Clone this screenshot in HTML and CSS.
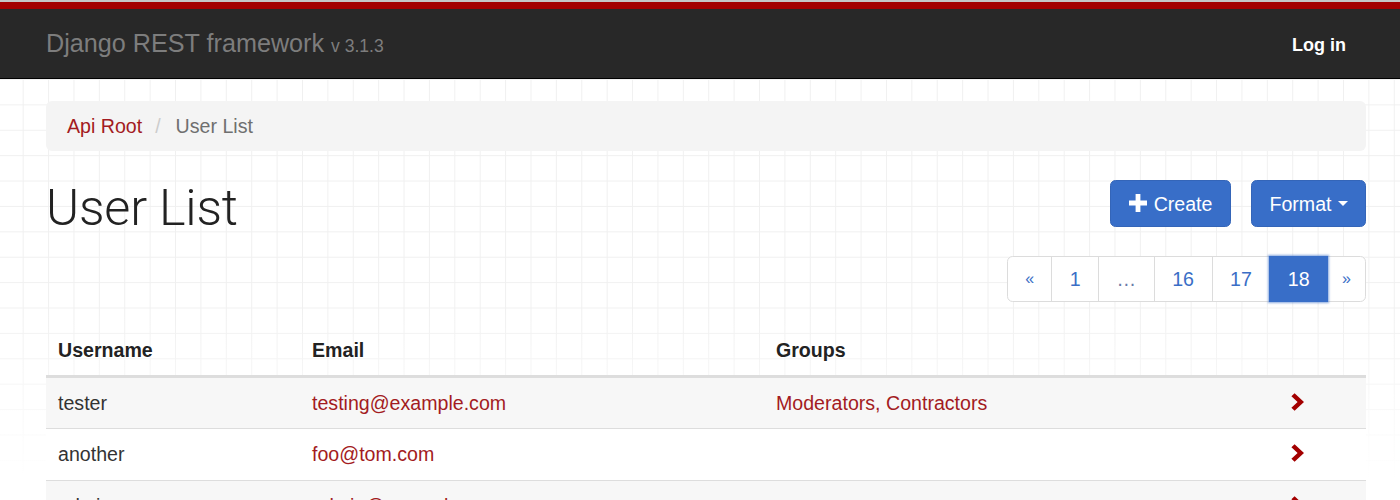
FILE: index.html
```
<!DOCTYPE html>
<html>
<head>
<meta charset="utf-8">
<title>User List – Django REST framework</title>
<link rel="stylesheet" href="styles.css">
</head>
<body>
<div class="topline">
  <nav class="navbar">
    <a class="brand" href="#">Django REST framework <span class="version">v 3.1.3</span></a>
    <a class="login" href="#">Log in</a>
  </nav>
</div>
<div class="page">
  <div class="container">
    <ul class="breadcrumb">
      <li><a href="#">Api Root</a></li>
      <li class="sep">/</li>
      <li class="active">User List</li>
    </ul>

    <div class="page-header">
      <h1>User List</h1>
      <div class="actions">
        <a class="btn" href="#"><svg class="plus" width="18" height="18" viewBox="0 0 18 18"><path d="M6.6 0h4.8v6.6H18v4.8h-6.6V18H6.6v-6.6H0V6.6h6.6z" fill="#fff"/></svg>Create</a>
        <a class="btn" href="#">Format<span class="caret"></span></a>
      </div>
    </div>

    <div class="pager-row">
      <ul class="pagination">
        <li><a class="arrow" href="#">«</a></li>
        <li><a href="#">1</a></li>
        <li><a class="dots" href="#">…</a></li>
        <li><a href="#">16</a></li>
        <li><a href="#">17</a></li>
        <li class="current"><a href="#">18</a></li>
        <li><a class="arrow" href="#">»</a></li>
      </ul>
    </div>

    <table class="table">
      <colgroup>
        <col class="c-user"><col class="c-email"><col class="c-groups"><col class="c-go">
      </colgroup>
      <thead>
        <tr><th>Username</th><th>Email</th><th>Groups</th><th></th></tr>
      </thead>
      <tbody>
        <tr>
          <td>tester</td>
          <td><a href="#">testing@example.com</a></td>
          <td><a href="#">Moderators</a><span class="comma">,</span> <a href="#">Contractors</a></td>
          <td class="go"><svg width="13" height="18" viewBox="0 0 13 18"><path d="M3.6 0.2L13 9L3.6 17.8L0.4 14.8L6.6 9L0.4 3.2Z" fill="#a30000"/></svg></td>
        </tr>
        <tr>
          <td>another</td>
          <td><a href="#">foo@tom.com</a></td>
          <td></td>
          <td class="go"><svg width="13" height="18" viewBox="0 0 13 18"><path d="M3.6 0.2L13 9L3.6 17.8L0.4 14.8L6.6 9L0.4 3.2Z" fill="#a30000"/></svg></td>
        </tr>
        <tr>
          <td>admin</td>
          <td><a href="#">admin@example.com</a></td>
          <td></td>
          <td class="go"><svg width="13" height="18" viewBox="0 0 13 18"><path d="M3.6 0.2L13 9L3.6 17.8L0.4 14.8L6.6 9L0.4 3.2Z" fill="#a30000"/></svg></td>
        </tr>
      </tbody>
    </table>
  </div>
</div>
</body>
</html>
```
FILE: styles.css
```
* { box-sizing: border-box; }

html, body {
  margin: 0;
  background: #fff;
}

body {
  font-family: "Liberation Sans", Arial, Helvetica, sans-serif;
  font-size: 19.6px;
  line-height: 28px;
  color: #333;
}

a { text-decoration: none; color: #a31b22; }

.topline {
  border-top: 2px solid #c6c6c6;
}

.navbar {
  height: 77px;
  background: #282828;
  border-top: 7px solid #a30000;
  border-bottom: 1px solid #000;
  display: flex;
  align-items: center;
  justify-content: space-between;
  padding: 0 54px 0 46px;
}

.brand {
  color: #7d7d7d;
  font-size: 25.2px;
  line-height: 28px;
  margin-top: 2px;
}

.version {
  font-size: 17.5px;
}

.login {
  color: #fff;
  font-weight: bold;
  font-size: 18px;
  line-height: 28px;
  margin-top: 2px;
}

.page {
  min-height: 421px;
  background-color: #fff;
  background-image:
    linear-gradient(to bottom, rgba(255,255,255,0) 0, rgba(255,255,255,0) 230px, #fff 400px),
    linear-gradient(to right, #f0f0f0 1px, transparent 1px),
    linear-gradient(to bottom, #f0f0f0 1px, transparent 1px);
  background-size: 100% 100%, 25.4px 25.4px, 25.4px 25.4px;
  background-position: 0 0, 22.7px 0, 22.7px 0;
  background-repeat: no-repeat, repeat, repeat;
  overflow: hidden;
}

.container {
  padding: 0 34px 0 46px;
}

.breadcrumb {
  list-style: none;
  margin: 22px 0 29px;
  padding: 11.2px 21px;
  background: #f4f4f4;
  border-radius: 6px;
  display: flex;
}

.breadcrumb li { color: #6f6f6f; }
.breadcrumb .sep { color: #ccc; padding: 0 15px 0 13px; }

.page-header {
  display: flex;
  justify-content: space-between;
  align-items: flex-start;
}

.page-header h1 {
  margin: 0;
  font-family: "Roboto", "Liberation Sans", Arial, sans-serif;
  font-weight: 300;
  font-size: 50.4px;
  line-height: 55px;
  color: #222;
  letter-spacing: -0.2px;
}

.actions {
  display: flex;
  gap: 20px;
}

.btn {
  display: flex;
  align-items: center;
  height: 47px;
  padding: 0 17.5px;
  background: #386ec8;
  border: 1px solid #3465b8;
  border-radius: 5.6px;
  color: #fff;
  font-size: 19.6px;
}

.plus { margin-right: 7px; margin-top: -1px; }

.caret {
  display: inline-block;
  width: 0;
  height: 0;
  margin-left: 6px;
  border-top: 5.6px solid #fff;
  border-left: 5.6px solid transparent;
  border-right: 5.6px solid transparent;
}

.pager-row {
  display: flex;
  justify-content: flex-end;
  margin-top: 21px;
}

.pagination {
  list-style: none;
  margin: 0;
  padding: 0;
  display: flex;
}

.pagination li a {
  display: block;
  height: 46px;
  line-height: 44px;
  padding: 0 17.5px;
  border: 1px solid #dcdcdc;
  margin-left: -1px;
  color: #3a6ec6;
  background: #fff;
  font-size: 19.6px;
}

.pagination li:first-child a {
  margin-left: 0;
  border-radius: 5.6px 0 0 5.6px;
}

.pagination li:last-child a {
  border-radius: 0 5.6px 5.6px 0;
}

.pagination .arrow {
  font-size: 16px;
  padding: 0 17px;
}

.pagination li:last-child .arrow { padding: 0 14px; }

.pagination .dots { color: #6a7aa8; }

.pagination .current a {
  background: #386ec8;
  border-color: #386ec8;
  color: #fff;
  padding: 0 17.5px;
  position: relative;
  z-index: 1;
  box-shadow: 0 0 2px 1px rgba(56,110,200,0.6);
}

.table {
  width: 100%;
  margin-top: 22px;
  border-collapse: collapse;
  border-spacing: 0;
}

.c-user { width: 254px; }
.c-email { width: 464px; }
.c-go { width: 96px; }

.table th {
  text-align: left;
  font-weight: bold;
  color: #222;
  padding: 11.2px 12px;
  line-height: 28px;
  border-bottom: 3px solid #ddd;
}

.table td {
  padding: 11.2px 12px;
  line-height: 28px;
  border-top: 1px solid #ddd;
  vertical-align: top;
}

.table thead + tbody tr:first-child td { border-top: 0; }

.table tbody tr:nth-child(odd) td { background: #f7f7f7; }
.table tbody tr:nth-child(even) td { background: #fff; }

.comma { color: #a31b22; }

.table td.go {
  padding-left: 21px;
  padding-top: 15px;
  padding-bottom: 7.4px;
}

.go svg { display: block; }
```
